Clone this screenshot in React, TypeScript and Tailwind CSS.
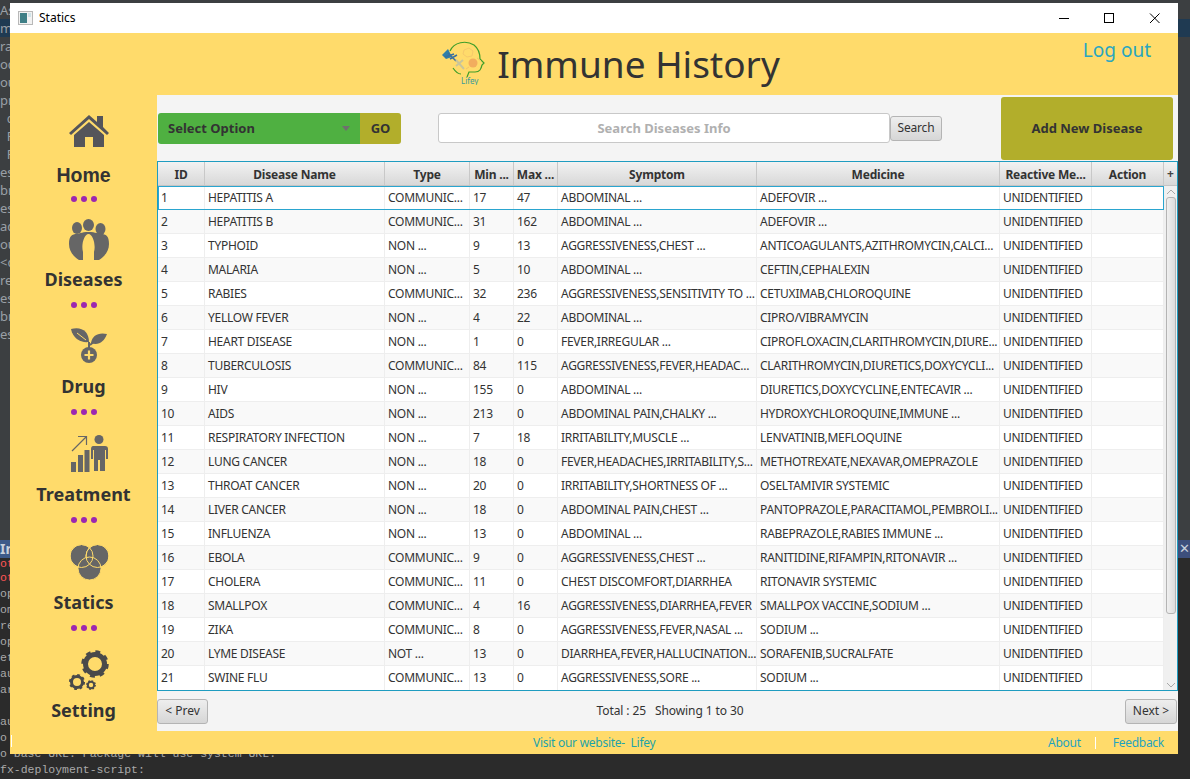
const columns = ["ID", "Disease Name", "Type", "Min ...", "Max ...", "Symptom", "Medicine", "Reactive Me...", "Action"];

const rows = [
  ["1", "HEPATITIS A", "COMMUNIC...", "17", "47", "ABDOMINAL ...", "ADEFOVIR ..."],
  ["2", "HEPATITIS B", "COMMUNIC...", "31", "162", "ABDOMINAL ...", "ADEFOVIR ..."],
  ["3", "TYPHOID", "NON ...", "9", "13", "AGGRESSIVENESS,CHEST ...", "ANTICOAGULANTS,AZITHROMYCIN,CALCI..."],
  ["4", "MALARIA", "NON ...", "5", "10", "ABDOMINAL ...", "CEFTIN,CEPHALEXIN"],
  ["5", "RABIES", "COMMUNIC...", "32", "236", "AGGRESSIVENESS,SENSITIVITY TO ...", "CETUXIMAB,CHLOROQUINE"],
  ["6", "YELLOW FEVER", "NON ...", "4", "22", "ABDOMINAL ...", "CIPRO/VIBRAMYCIN"],
  ["7", "HEART DISEASE", "NON ...", "1", "0", "FEVER,IRREGULAR ...", "CIPROFLOXACIN,CLARITHROMYCIN,DIURE..."],
  ["8", "TUBERCULOSIS", "COMMUNIC...", "84", "115", "AGGRESSIVENESS,FEVER,HEADAC...", "CLARITHROMYCIN,DIURETICS,DOXYCYCLI..."],
  ["9", "HIV", "NON ...", "155", "0", "ABDOMINAL ...", "DIURETICS,DOXYCYCLINE,ENTECAVIR ..."],
  ["10", "AIDS", "NON ...", "213", "0", "ABDOMINAL PAIN,CHALKY ...", "HYDROXYCHLOROQUINE,IMMUNE ..."],
  ["11", "RESPIRATORY INFECTION", "NON ...", "7", "18", "IRRITABILITY,MUSCLE ...", "LENVATINIB,MEFLOQUINE"],
  ["12", "LUNG CANCER", "NON ...", "18", "0", "FEVER,HEADACHES,IRRITABILITY,S...", "METHOTREXATE,NEXAVAR,OMEPRAZOLE"],
  ["13", "THROAT CANCER", "NON ...", "20", "0", "IRRITABILITY,SHORTNESS OF ...", "OSELTAMIVIR SYSTEMIC"],
  ["14", "LIVER CANCER", "NON ...", "18", "0", "ABDOMINAL PAIN,CHEST ...", "PANTOPRAZOLE,PARACITAMOL,PEMBROLI..."],
  ["15", "INFLUENZA", "NON ...", "13", "0", "ABDOMINAL ...", "RABEPRAZOLE,RABIES IMMUNE ..."],
  ["16", "EBOLA", "COMMUNIC...", "9", "0", "AGGRESSIVENESS,CHEST ...", "RANITIDINE,RIFAMPIN,RITONAVIR ..."],
  ["17", "CHOLERA", "COMMUNIC...", "11", "0", "CHEST DISCOMFORT,DIARRHEA", "RITONAVIR SYSTEMIC"],
  ["18", "SMALLPOX", "COMMUNIC...", "4", "16", "AGGRESSIVENESS,DIARRHEA,FEVER", "SMALLPOX VACCINE,SODIUM ..."],
  ["19", "ZIKA", "COMMUNIC...", "8", "0", "AGGRESSIVENESS,FEVER,NASAL ...", "SODIUM ..."],
  ["20", "LYME DISEASE", "NOT ...", "13", "0", "DIARRHEA,FEVER,HALLUCINATION...", "SORAFENIB,SUCRALFATE"],
  ["21", "SWINE FLU", "COMMUNIC...", "13", "0", "AGGRESSIVENESS,SORE ...", "SODIUM ..."],
];

const ideLines = ["As", "m", "ra", "od", "ou", "pr", "  c", "  F", "  F", "es", "br", "es", "ac", "ou", "<c", "re", "es", "br", "es"];
const consoleLines = ["ot", "ot", "op", "om", "re", "op", "et", "au", "ar", "", "au", "o"];

const GRID = "grid grid-cols-[47px_180px_85px_44px_44px_199px_243px_92px_72px]";

function HomeIcon() {
  return (
    <svg width="40" height="33" viewBox="0 0 40 33">
      <path d="M0 18 L20 0 L28 7 V1 H34 V12 L40 18 L38 20 L20 4 L2 20 Z" fill="#55555a" />
      <path d="M5 20 L20 7 L35 20 V32 H24 V22 H16 V32 H5 Z" fill="#55555a" />
    </svg>
  );
}

function PeopleIcon() {
  return (
    <svg width="40" height="41" viewBox="0 0 40 41" fill="#666666">
      <ellipse cx="8" cy="9" rx="5" ry="6" />
      <ellipse cx="31.500" cy="10" rx="5" ry="6" />
      <ellipse cx="19.500" cy="6" rx="5.500" ry="6" />
      <path d="M0 25 C0 17 3 15 8 15 C10 15 12 13 19.500 13 C27 13 29 15 32 15 C37 15 40 17 40 25 C40 32 36 37 30 41 H10 C4 37 0 32 0 25 Z" />
      <path d="M14 41 V33 C12 26 15 15 19.500 15 C24 15 27 26 25 33 V41 Z" fill="#ffdb6b" />
    </svg>
  );
}

function SproutIcon() {
  return (
    <svg width="36" height="36" viewBox="0 0 36 36">
      <path d="M0 1 C10 -2 18 3 18 14 C10 15 2 11 0 1 Z" fill="#666666" />
      <path d="M36 6 C27 4 21 8 20 15 C27 18 33 14 36 6 Z" fill="#666666" />
      <path d="M18 14 V21 M25 12 L19 17" stroke="#666666" strokeWidth="2" fill="none" />
      <path d="M6 5 L15 12" stroke="#ffdb6b" strokeWidth="1" fill="none" />
      <circle cx="18" cy="27" r="8" fill="#666666" />
      <path d="M18 22.500 V31.500 M13.500 27 H22.500" stroke="#ffdb6b" strokeWidth="2.200" />
    </svg>
  );
}

function GrowthIcon() {
  return (
    <svg width="37" height="37" viewBox="0 0 37 37" fill="#666666">
      <rect x="0" y="27" width="5" height="10" />
      <rect x="7" y="20" width="5" height="17" />
      <rect x="13.500" y="15" width="5" height="22" />
      <path d="M1 16 L15 2 M7 1.500 H15.500 V10" stroke="#666666" strokeWidth="1.200" fill="none" />
      <circle cx="28" cy="4.500" r="4.500" />
      <path d="M22 11 H34 C36 11 37 12 37 14 V24 H35 V15 H34 V36 H29 V25 H27 V36 H23 V15 H22 V24 H20 V14 C20 12 21 11 22 11 Z" />
    </svg>
  );
}

function VennIcon() {
  return (
    <svg width="39" height="36" viewBox="0 0 39 36" fill="#666666" stroke="#ffdb6b" strokeWidth="1">
      <circle cx="11.500" cy="12" r="11.500" />
      <circle cx="27.500" cy="12" r="11.500" />
      <circle cx="19.500" cy="24.500" r="11.500" />
      <circle cx="11.500" cy="12" r="11.500" fill="none" />
      <circle cx="27.500" cy="12" r="11.500" fill="none" />
    </svg>
  );
}

function Gear({ cx, cy, r, width, teeth }: { cx: number; cy: number; r: number; width: number; teeth: number }) {
  const circumference = 2 * Math.PI * (r + width / 2);
  const dash = circumference / teeth / 2;
  return (
    <g fill="none" stroke="#4a4a4a">
      <circle cx={cx} cy={cy} r={r} strokeWidth={width} />
      <circle cx={cx} cy={cy} r={r + width / 2} strokeWidth={width * 0.7} strokeDasharray={`${dash} ${dash}`} />
    </g>
  );
}

function GearsIcon() {
  return (
    <svg width="42" height="43" viewBox="0 0 42 43">
      <Gear cx={27} cy={14} r={9.500} width={5} teeth={8} />
      <Gear cx={9} cy={32} r={5.500} width={3} teeth={8} />
      <Gear cx={23} cy={35} r={3.200} width={2} teeth={8} />
    </svg>
  );
}

function Logo() {
  return (
    <svg width="44" height="44" viewBox="0 0 44 44" className="mr-[11px]">
      <path d="M8 10 C12 1 24 -1 32 4 C37 8 38 14 38 18 L42 22 L40 24 C39 28 38 31 33 31 H27 L25 36" stroke="#3f9e2a" strokeWidth="1.200" fill="none" />
      <path d="M11 27 C13 30 16 33 19 33" stroke="#3f9e2a" strokeWidth="1.200" fill="none" />
      <path d="M0 14 L6 8 L10 16 L4 18 Z" fill="#2f7fa8" />
      <path d="M6 12 L14 20 M3 16 L12 13 M8 18 L15 14" stroke="#3a6f9e" strokeWidth="1.500" />
      <path d="M14 19 L22 28 M14 25 L21 19" stroke="#c9c59a" strokeWidth="2" />
      <path d="M22 9 L27 7 L31 10 L30 15 L25 16 L21 13 Z" stroke="#f2c46a" strokeWidth="0.800" fill="none" />
      <circle cx="31" cy="22" r="4.500" fill="#f2ad5e" />
      <path d="M35 17 L39 20 M27 26 L24 28" stroke="#f2c46a" strokeWidth="1" />
      <text x="19" y="43" fontSize="8" fill="#3a9a9a" fontFamily="Noto Sans, sans-serif">Lifey</text>
    </svg>
  );
}

function Dots({ className }: { className: string }) {
  return (
    <div className={`flex justify-center gap-[4px] pl-px ${className}`}>
      <span className="h-[6px] w-[6px] rounded-full bg-[#9c27b0]" />
      <span className="h-[6px] w-[6px] rounded-full bg-[#9c27b0]" />
      <span className="h-[6px] w-[6px] rounded-full bg-[#9c27b0]" />
    </div>
  );
}

function NavItem({ icon, label, iconClass, labelClass }: { icon: React.ReactNode; label: string; iconClass: string; labelClass: string }) {
  return (
    <>
      <div className={`flex h-[44px] items-center justify-center pl-[11px] ${iconClass}`}>{icon}</div>
      <div className={`h-[28px] text-center leading-[28px] font-bold text-[#333333] ${labelClass}`}>{label}</div>
    </>
  );
}

function Sidebar() {
  return (
    <aside className="w-[147px] shrink-0 pt-[14px]">
      <NavItem icon={<HomeIcon />} label="Home" iconClass="" labelClass="mt-[8px] font-['Liberation_Sans',sans-serif] text-[19.500px]" />
      <Dots className="mt-[7px]" />
      <NavItem icon={<PeopleIcon />} label="Diseases" iconClass="mt-[15px]" labelClass="mt-[4px] text-[18px]" />
      <Dots className="mt-[9px]" />
      <NavItem icon={<SproutIcon />} label="Drug" iconClass="mt-[16px]" labelClass="mt-[4px] text-[18px]" />
      <Dots className="mt-[9px]" />
      <NavItem icon={<GrowthIcon />} label="Treatment" iconClass="mt-[16px]" labelClass="mt-[5px] text-[18px]" />
      <Dots className="mt-[9px]" />
      <NavItem icon={<VennIcon />} label="Statics" iconClass="mt-[17px]" labelClass="mt-[4px] text-[18px]" />
      <Dots className="mt-[9px]" />
      <NavItem icon={<GearsIcon />} label="Setting" iconClass="mt-[18px]" labelClass="mt-[3px] text-[18px]" />
    </aside>
  );
}

function Toolbar() {
  return (
    <div className="flex h-[66px] items-center bg-[#f4f4f4] pl-[1px] pr-[5px]">
      <div className="flex h-[31px] w-[202px] items-center justify-between rounded-l-[3px] bg-[#4fb041] pl-[10px] pr-[10px] pt-px text-[13px] font-bold text-[#333333]">
        <span>Select Option</span>
        <span className="h-0 w-0 border-x-[4px] border-t-[5px] border-x-transparent border-t-[#6f6f6f]" />
      </div>
      <div className="flex h-[31px] w-[41px] items-center justify-center rounded-r-[3px] bg-[#b2ae2b] pt-px text-[13px] font-bold text-[#333333]">GO</div>
      <div className="ml-[37px] flex h-[30px] w-[452px] items-center justify-center rounded-[3px] border border-[#c8c8c8] bg-white pt-px text-[13px] font-bold text-[#b0b0b0]">Search Diseases Info</div>
      <div className="flex h-[25px] w-[52px] items-center justify-center rounded-[3px] border border-[#b4b4b4] bg-gradient-to-b from-[#eeeeee] to-[#d6d6d6] text-[12px] tracking-[-0.2px] text-[#333333]">Search</div>
      <div className="ml-auto flex h-[63px] w-[172px] items-center justify-center rounded-[3px] bg-[#b2ae2b] pt-px text-[13px] font-bold text-[#333333]">Add New Disease</div>
    </div>
  );
}

function Table() {
  return (
    <div className="relative h-[530px] border border-[#1f9cc0] bg-white">
      <div className="flex h-[24px] border-b border-[#c4c4c4] bg-gradient-to-b from-[#f2f2f2] to-[#d8d8d8]">
        <div className={GRID}>
          {columns.map((c) => (
            <div key={c} className="flex items-center justify-center border-r border-[#c8c8c8] pt-[2px] text-[12px] font-bold tracking-[-0.2px] whitespace-nowrap text-[#333333]">{c}</div>
          ))}
        </div>
        <div className="flex flex-1 items-center justify-center text-[12px] font-bold leading-none text-[#444444]">+</div>
      </div>
      <div className="flex">
        <div className="w-[1006px]">
          {rows.map((r, i) => (
            <div key={r[0]} className={`${GRID} h-[24px] border-b border-[#eeeeee] ${i % 2 === 0 ? "bg-white" : "bg-[#f9f9f9]"} ${i === 0 ? "outline outline-1 -outline-offset-1 outline-[#2aa5cf]" : ""} ${i === 20 ? "border-b-0" : ""}`}>
              {[...r, "UNIDENTIFIED", ""].map((v, j) => (
                <div key={j} className="flex items-center whitespace-nowrap overflow-hidden border-r border-[#eeeeee] pl-[3px] text-[12px] tracking-[-0.27px] text-[#333333]">{v}</div>
              ))}
            </div>
          ))}
        </div>
        <div className="relative flex-1 bg-[#f0f0f0]">
          <svg width="10" height="6" viewBox="0 0 10 6" className="absolute left-[2px] top-[3px]"><path d="M1 5 L5 1 L9 5" stroke="#a8a8a8" fill="none" /></svg>
          <div className="absolute left-[2px] top-[11px] h-[417px] w-[10px] rounded-[3px] border border-[#b4b4b4] bg-gradient-to-r from-[#f0f0f0] to-[#dcdcdc]" />
          <svg width="10" height="6" viewBox="0 0 10 6" className="absolute bottom-[2px] left-[2px]"><path d="M1 1 L5 5 L9 1" stroke="#a8a8a8" fill="none" /></svg>
        </div>
      </div>
    </div>
  );
}

function Pager() {
  return (
    <div className="flex h-[40px] items-center justify-between bg-[#f4f4f4] text-[12px] text-[#333333]">
      <div className="flex h-[25px] w-[51px] items-center justify-center rounded-[3px] border border-[#b4b4b4] bg-gradient-to-b from-[#eeeeee] to-[#d6d6d6]">&lt; Prev</div>
      <div className="pl-[7px] tracking-[-0.1px] whitespace-pre">Total : 25   Showing 1 to 30</div>
      <div className="mr-px flex h-[25px] w-[52px] items-center justify-center rounded-[3px] border border-[#b4b4b4] bg-gradient-to-b from-[#eeeeee] to-[#d6d6d6]">Next &gt;</div>
    </div>
  );
}

function Window() {
  return (
    <div className="absolute left-[10px] top-[3px] flex h-[751px] w-[1168px] flex-col bg-[#ffdb6b]">
      <div className="flex h-[30px] shrink-0 items-center bg-white pl-[8px] text-[12px] text-black">
        <svg width="15" height="14" viewBox="0 0 15 14" className="mr-[6px]">
          <rect x="0.500" y="0.500" width="14" height="13" fill="#f2f2f2" stroke="#b8b8b8" />
          <rect x="2" y="2" width="7" height="10" fill="#3f7f86" />
          <rect x="10" y="2" width="3" height="4" fill="#cfe3e8" />
        </svg>
        <span>Statics</span>
        <svg width="101" height="12" viewBox="0 0 101 12" className="ml-auto mr-[18px]">
          <path d="M0 6.500 H10" stroke="#000" />
          <rect x="45.500" y="1.500" width="9" height="9" fill="none" stroke="#000" />
          <path d="M91 1.500 L100.500 11 M100.500 1.500 L91 11" stroke="#000" />
        </svg>
      </div>
      <header className="relative flex h-[62px] shrink-0 items-center justify-center pb-[2px] pl-[34px]">
        <Logo />
        <span className="text-[37px] leading-none text-[#333333]">Immune History</span>
        <span className="absolute right-[27px] top-[3px] text-[19px] text-[#2aa6c0]">Log out</span>
      </header>
      <div className="flex min-h-0 flex-1">
        <Sidebar />
        <main className="flex-1">
          <Toolbar />
          <Table />
          <Pager />
        </main>
      </div>
      <footer className="relative flex h-[23px] shrink-0 items-center text-[12px] tracking-[-0.27px] text-[#1fa3a8]">
        <span className="ml-[523px] whitespace-pre">Visit our website-  Lifey</span>
        <span className="ml-auto text-[#1fa3c0]">About</span>
        <span className="ml-[14px] mr-[17px] h-[12px] w-px bg-white" />
        <span className="mr-[14px] text-[#1fa3c0]">Feedback</span>
        <span className="absolute left-px top-[4px] h-[12px] w-px bg-white" />
      </footer>
    </div>
  );
}

export default function App() {
  return (
    <div className="relative h-[779px] w-[1190px] overflow-hidden bg-[#2b2b2b] font-['Noto_Sans','Open_Sans',sans-serif]">
      <div className="flex h-[540px] flex-col bg-[#3c3f41] pt-[1px] text-[13px] leading-[18px] text-[#9aa0a6] whitespace-pre">
        {ideLines.map((l, i) => (
          <div key={i} className={`h-[18px] ${i === 1 ? "bg-[#1f3a52]" : ""}`}>{l}</div>
        ))}
      </div>
      <div className="flex h-[18px] items-center justify-between bg-[#2f3133]">
        <span className="bg-[#3d5a8a] pr-2 text-[14px] leading-[18px] font-bold text-[#c8d0dc]">In</span>
        <span className="flex h-[18px] w-[12px] items-center justify-center bg-[#3d4f7c] text-[13px] text-[#c8d0dc]">✕</span>
      </div>
      <div className="font-['Liberation_Mono',monospace] text-[11.500px] leading-[16px] text-[#a9a9a9] whitespace-pre">
        {consoleLines.map((l, i) => (
          <div key={i} className={i === 0 ? "h-[12px] leading-[12px] text-[#ff5555]" : i === 1 ? "h-[16px] text-[#ff5555]" : "h-[16px]"}>{l}</div>
        ))}
        <div className="h-[16px]">o base URL. Package will use system URL.</div>
        <div className="h-[16px]">fx-deployment-script:</div>
      </div>
      <Window />
    </div>
  );
}
